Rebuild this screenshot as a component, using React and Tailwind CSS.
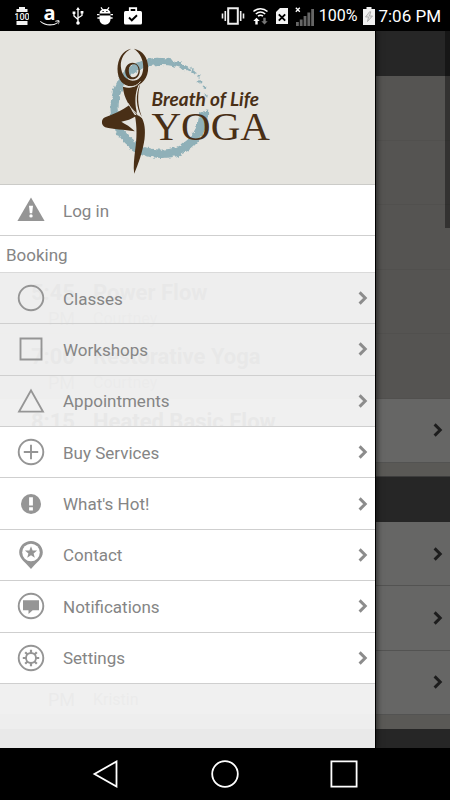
import { useState } from 'react';

const bookingItems = [
  { label: 'Classes', icon: 'circle' },
  { label: 'Workshops', icon: 'square' },
  { label: 'Appointments', icon: 'triangle' },
];

const moreItems = [
  { label: 'Buy Services', icon: 'plus' },
  { label: "What's Hot!", icon: 'alert' },
  { label: 'Contact', icon: 'pin' },
  { label: 'Notifications', icon: 'chat' },
  { label: 'Settings', icon: 'gear' },
];

const today = [
  { past: true },
  { past: true },
  { past: true },
  { past: true, time: '5:45', half: 'PM', name: 'Power Flow', teacher: 'Courtney' },
  { past: true, time: '7:00', half: 'PM', name: 'Restorative Yoga', teacher: 'Courtney' },
  { time: '8:15', name: 'Heated Basic Flow' },
];

const tomorrow = [{}, {}, { half: 'PM', teacher: 'Kristin' }];

function Chevron({ className }) {
  return (
    <svg viewBox="0 0 10 14" className={`w-[10px] h-[14px] shrink-0 ${className}`} fill="none" stroke="currentColor" strokeWidth="3" aria-hidden="true">
      <path d="M1.6 1.4 7.2 7l-5.6 5.6" />
    </svg>
  );
}

function MenuIcon({ name }) {
  return (
    <svg viewBox="0 0 28 28" className="w-7 h-7 shrink-0 text-[#959595]" fill="none" stroke="currentColor" strokeWidth="1.9" aria-hidden="true">
      {name === 'warning' && (
        <>
          <path d="M14 1.5 27.6 25H.4z" fill="currentColor" stroke="none" />
          <path d="M12 9.8h4l-.8 7.4h-2.4z" fill="#fff" stroke="none" />
          <circle cx="14" cy="19.9" r="1.7" fill="#fff" stroke="none" />
        </>
      )}
      {name === 'circle' && <circle cx="14" cy="14" r="12.3" />}
      {name === 'square' && <path d="M3.5 3.5h21v21h-21z" />}
      {name === 'triangle' && <path d="M14 3.4 25.9 24.6H2.1z" />}
      {name === 'plus' && (
        <>
          <circle cx="14" cy="14" r="12.3" />
          <path d="M14 6.8v14.4M6.8 14h14.4" />
        </>
      )}
      {name === 'alert' && (
        <>
          <circle cx="14" cy="14" r="10" fill="currentColor" stroke="none" />
          <path d="M12.1 7.3h3.8v8.2h-3.8zM12.1 17.3h3.8v3.2h-3.8z" fill="#fff" stroke="none" />
        </>
      )}
      {name === 'pin' && (
        <>
          <path d="M14 0C7.5 0 2.2 5 2.2 11.3c0 6.7 6.5 10.2 11.8 16.7 5.3-6.5 11.8-10 11.8-16.7C25.8 5 20.5 0 14 0z" fill="currentColor" stroke="none" />
          <circle cx="14" cy="11.5" r="8.8" fill="#fff" stroke="none" />
          <path d="m14 5.2 1.6 4.2 4.5.2-3.5 2.8 1.2 4.4-3.8-2.5-3.8 2.5 1.2-4.4-3.5-2.8 4.5-.2z" fill="currentColor" stroke="none" />
        </>
      )}
      {name === 'chat' && (
        <>
          <circle cx="14" cy="14" r="12.3" />
          <path d="M6 8.2h16v10h-6.3L11.5 22v-3.8H6z" fill="currentColor" stroke="none" />
        </>
      )}
      {name === 'gear' && (
        <>
          <circle cx="14" cy="14" r="12.3" />
          <circle cx="14" cy="14" r="5" strokeWidth="1.9" />
          <path d="M14 5.8v3.2M14 19v3.2M5.800 14H9M19 14h3.200M8.200 8.200l2.300 2.300M17.500 17.500l2.300 2.300M19.800 8.200l-2.300 2.300M10.500 17.500l-2.300 2.300" strokeWidth="2.2" />
        </>
      )}
    </svg>
  );
}

function MenuItem({ item, active, onSelect }) {
  return (
    <li className="border-b border-[#cfcfcf]">
      <button
        type="button"
        onClick={() => onSelect(item.label)}
        aria-current={active ? 'page' : undefined}
        className="w-full h-full flex items-center pl-[17px] pr-[7px] text-left cursor-pointer"
      >
        <MenuIcon name={item.icon} />
        <span className="flex-1 pl-[18px] pt-px">{item.label}</span>
        <Chevron className="text-[#8c8c8c]" />
      </button>
    </li>
  );
}

function Logo() {
  return (
    <svg viewBox="2.5 -4 190 153" className="w-[190px] h-[153px]" role="img" aria-label="Breath of Life Yoga">
      <defs>
        <filter id="brush" x="-10%" y="-10%" width="120%" height="120%" colorInterpolationFilters="sRGB">
          <feTurbulence type="fractalNoise" baseFrequency="0.07" numOctaves="2" seed="4" />
          <feDisplacementMap in="SourceGraphic" scale="16" xChannelSelector="R" yChannelSelector="G" />
        </filter>
      </defs>
      <g transform="scale(0.33333)">
        {/* brushed ring */}
        <g filter="url(#brush)" fill="#8fb0b8" stroke="#8fb0b8" strokeWidth="4">
          <path d="M351 228C350 312 292 368 213 367 128 367 63 308 62 218 62 138 112 78 192 71 228 68 256 76 290 94L284 103C252 88 226 85 194 89 126 95 82 148 82 218 84 290 137 345 213 346 276 346 324 302 328 236z" />
          <path d="M284 92l16 7-3 9-15-8zM306 103l12 8-5 7-10-8zM320 118l10 4-4 6-8-3zM325 132l11 9-6 4-8-6zM338 152l9 3-2 7-8-4zM343 178l6 8-4 4z" strokeWidth="1" />
        </g>
        {/* dancer */}
        <g fill="#492f16">
          <path d="M122 41C96 46 81 72 81 102 81 132 96 154 124 154 155 153 174 128 173 96 172 68 157 46 130 41 149 53 160 76 158 102 156 124 145 137 126 137 106 136 93 119 91 94 90 70 102 51 122 41z" />
          <path d="M126 83c-13 0-22 11-22 25 0 14 9 25 21 25 13 0 23-11 23-25S139 83 126 83zm4 5c9 0 14 8 14 18 0 12-7 21-15 21-9 0-14-9-14-20s6-19 15-19z" fillRule="evenodd" />
          <path d="M97 155c20 6 38 3 50-10-12 22-14 46-11 72l5 26c-10-14-22-26-29-40-9-16-13-30-15-48z" />
          <path d="M116 211C96 226 70 238 44 247c-13 5-13 24 0 30 24 7 58 7 89 12-12-13-28-22-41-29 16-2 32-8 44-16-8-9-14-20-20-33z" />
          <path d="M133 240c7 36 6 70 1 105-3 26-6 48-3 71 11-24 26-67 31-103 3-28 1-51-10-67-5-5-12-7-19-6z" />
          <path d="M150 144c-10 34-10 64 4 102-17-28-21-66-4-102z" />
        </g>
        <g fill="none" stroke="#e5e4df" strokeWidth="2.5">
          <path d="M98 153c22 6 42 1 52-14" />
          <path d="M112 204c10 18 24 30 42 44" />
        </g>
      </g>
      <text x="61" y="71" className="font-['Lato'] font-bold italic text-[19px]" fill="#492f16">Breath of Life</text>
      <text x="61" y="105" className="font-['Liberation_Serif'] text-[41px]" fill="#492f16">YOGA</text>
    </svg>
  );
}

function ClassRow({ row }) {
  return (
    <li className={row.past ? 'flex items-center border-b border-[#cac8c2] bg-[#d4d2cc]' : 'flex items-center border-b border-[#d0d0ce] bg-[#fefefc]'}>
      <div className="w-[75px] self-stretch pt-[9px] flex flex-col items-end text-[#333]">
        <span className="h-7 text-[22px] leading-7 font-bold">{row.time}</span>
        <span className="text-[18px] leading-6 text-[#777]">{row.half}</span>
      </div>
      <div className="flex-1 self-stretch pl-[18px] pt-[9px] flex flex-col text-[#333]">
        <span className="h-7 text-[22px] leading-7 font-bold whitespace-nowrap">{row.name}</span>
        <span className="text-[16px] leading-6 text-[#888]">{row.teacher}</span>
      </div>
      {!row.past && <Chevron className="mr-[7px] text-[#4a4a4a]" />}
    </li>
  );
}

function StatusBar() {
  return (
    <header className="h-[31px] shrink-0 bg-black text-white flex items-center justify-between pt-px pl-[15px] pr-[9px]">
      <div className="flex items-center">
        {/* battery widget */}
        <svg viewBox="0 0 14 20" className="w-[14px] h-5" fill="#f2f2f2" aria-hidden="true">
          <path d="M4 1h6v2h2.5v3h-11V3H4zM1.5 15h11v4h-11z" />
          <text x="7" y="14" textAnchor="middle" className="font-['Roboto'] font-medium text-[9px]">100</text>
        </svg>
        {/* shopping app */}
        <svg viewBox="0 0 20 28" className="w-5 h-7 ml-[11px]" fill="#fff" aria-hidden="true">
          <text x="9.500" y="18" textAnchor="middle" className="font-['Open_Sans'] font-bold text-[20px]">a</text>
          <path d="M.5 19c5 4 12 4.500 17 1.200l.5.800C12.500 25 4.500 24 0 19.600zM15 19c2-.8 4-.8 4.400-.2.400.8-.2 3-1.400 4 .4-1.200.8-2.600.4-3-.4-.4-2-.3-3.400-.2z" />
        </svg>
        {/* usb */}
        <svg viewBox="0 0 12 18" className="w-3 h-[18px] ml-3" fill="none" stroke="#fff" strokeWidth="1.300" aria-hidden="true">
          <path d="M6 2v13M2 6v3l4 3.500M10 6v2.500L6 11" />
          <path d="M6 0l2 3H4z" fill="#fff" stroke="none" />
          <circle cx="6" cy="16" r="1.800" fill="#fff" stroke="none" />
          <path d="M.6 4.500h2.800V7H.6zM8.600 4h2.800v2.600H8.600z" fill="#fff" stroke="none" />
        </svg>
        {/* debugging */}
        <svg viewBox="0 0 16 18" className="w-4 h-[18px] ml-[13px]" fill="#fff" aria-hidden="true">
          <path d="M2.500 6.500C2.500 3.600 4.600 2 8 2s5.500 1.600 5.500 4.500zM2.500 8.400h11V12c0 3.400-2.200 5.700-5.500 5.700S2.500 15.400 2.500 12z" />
          <path d="M4 .4 5.800 3M12 .4 10.200 3M0 7.600h2.500M13.500 7.600H16M.4 11H3M13 11h2.600" stroke="#fff" strokeWidth="1.300" />
          <path d="M5.500 4h1.200v1.100H5.500zM9.300 4h1.200v1.100H9.300z" fill="#000" />
        </svg>
        {/* work profile bag */}
        <svg viewBox="0 0 20 18" className="w-5 h-[18px] ml-[10px]" fill="#fff" aria-hidden="true">
          <path d="M6.800 4V1.200h6.400V4" fill="none" stroke="#fff" strokeWidth="1.800" />
          <rect x="1" y="4" width="18" height="13.500" rx="1.500" />
          <path d="m6 10.500 2.800 2.800 5.200-5" fill="none" stroke="#000" strokeWidth="1.900" />
        </svg>
      </div>
      <div className="flex items-center">
        {/* vibrate */}
        <svg viewBox="0 0 24 18" className="w-6 h-[18px]" fill="none" stroke="#eee" aria-hidden="true">
          <path d="M7.200 1.200h9.600v15.600H7.200z" strokeWidth="2" />
          <path d="M4.300 4v10M1.500 6.500v5M19.700 4v10M22.500 6.500v5" strokeWidth="1.600" />
        </svg>
        {/* wifi */}
        <svg viewBox="0 0 17 18" className="w-[17px] h-[18px] ml-[7px]" fill="none" stroke="#fff" strokeWidth="1.500" aria-hidden="true">
          <path d="M1.500 4.500c4-3.800 10-3.800 14 0M3.800 7c3-2.600 6.400-2.600 9.400 0M6 9.200c1.600-1.300 3.400-1.300 5 0" />
          <path d="M4.500 10.800 1.300 14h2v3.500h2.400V14h2z" fill="#fff" stroke="none" />
          <path d="m12.500 17.500 3.200-3.200h-2v-3.500h-2.400v3.500h-2z" fill="#777" stroke="none" />
        </svg>
        {/* no sim */}
        <svg viewBox="0 0 12 16" className="w-3 h-4 ml-[7px]" aria-hidden="true">
          <path d="M4 0h8v16H0V4z" fill="#f4f4f4" />
          <path d="m2.800 6.300 6.400 6.400M9.200 6.300l-6.400 6.400" stroke="#000" strokeWidth="1.900" />
        </svg>
        {/* signal */}
        <svg viewBox="0 0 19 19" className="w-[19px] h-[19px] ml-[7px]" aria-hidden="true">
          <path d="m.8.800 4 4M4.800.800l-4 4" stroke="#fff" strokeWidth="1.300" />
          <path d="M1 15h2.800v4H1zM4.800 12.500h2.800V19H4.800zM8.600 9h2.800v10H8.600zM12.400 5.500h2.800V19h-2.800zM16.200 2H19v17h-2.800z" fill="#666" />
        </svg>
        <span className="ml-[5px] text-[16px] leading-5">100%</span>
        <svg viewBox="0 0 12 18" className="w-3 h-[18px] ml-[6px]" aria-hidden="true">
          <path d="M3.500 0h5v2H12v16H0V2h3.500z" fill="#f0f0f0" />
          <path d="M6.500 4.800 2.500 10h3l-1 4.500L9.500 9h-3l1.300-4.200z" fill="#ddd" stroke="#999" strokeWidth=".7" />
        </svg>
        <span className="ml-[3px] text-[17px] leading-5">7:06 PM</span>
      </div>
    </header>
  );
}

export default function App() {
  const [open, setOpen] = useState(true);
  const [current, setCurrent] = useState('Classes');

  return (
    <div className="min-h-screen flex flex-col bg-black font-['Roboto',sans-serif]">
      <StatusBar />

      <main className="relative flex-1 overflow-hidden bg-[#606060]">
        {/* Schedule */}
        <div className="h-[45px]" />
        <ul className="grid auto-rows-fr min-h-[387px]">
          {today.map((row, i) => <ClassRow key={i} row={row} />)}
        </ul>
        <div className="h-[14px] bg-[#e2ded8] border-b border-[#999]" />
        <div className="h-[45px]" />
        <ul className="grid auto-rows-fr min-h-[193px]">
          {tomorrow.map((row, i) => <ClassRow key={i} row={row} />)}
        </ul>
        <div className="h-[14px] bg-[#e2ded8]" />

        {open && (
          <>
            <button type="button" aria-label="Close menu" onClick={() => setOpen(false)} className="absolute inset-0 w-full bg-black/60" />
            <div className="absolute right-0 top-0 w-[5px] h-[197px] bg-black/40" />

            {/* Drawer */}
            <nav className="absolute inset-y-0 left-0 w-5/6 flex flex-col bg-white/90 text-[#858585] text-[17px] leading-6 shadow-[1px_0_0_#000,2px_0_6px_rgba(0,0,0,0.6)]">
              <div className="h-[154px] bg-[#e5e4df] border-b border-[#cbcbc8] flex justify-center">
                <Logo />
              </div>
              <button type="button" className="h-[51px] bg-white border-b border-[#cfcfcf] flex items-center pl-[17px] text-left cursor-pointer">
                <MenuIcon name="warning" />
                <span className="pl-[18px] pt-px">Log in</span>
              </button>
              <h2 className="h-[37px] bg-white border-b border-[#dadada] flex items-center pl-[6px] pt-px">Booking</h2>
              <ul className="grid auto-rows-fr min-h-[154px]">
                {bookingItems.map((item) => (
                  <MenuItem key={item.label} item={item} active={current === item.label} onSelect={setCurrent} />
                ))}
              </ul>
              <ul className="grid auto-rows-fr min-h-[257px] bg-white">
                {moreItems.map((item) => (
                  <MenuItem key={item.label} item={item} active={current === item.label} onSelect={setCurrent} />
                ))}
              </ul>
            </nav>
          </>
        )}
      </main>

      {/* System buttons */}
      <footer className="h-[52px] shrink-0 flex items-center justify-center gap-[91px]">
        <button type="button" aria-label="Back" onClick={() => setOpen(false)}>
          <svg viewBox="0 0 28 28" className="w-7 h-7" fill="none" stroke="#fff" strokeWidth="1.8">
            <path d="M24.5 1.5v25L2.5 14z" />
          </svg>
        </button>
        <button type="button" aria-label="Home" onClick={() => setOpen(true)}>
          <svg viewBox="0 0 28 28" className="w-7 h-7" fill="none" stroke="#fff" strokeWidth="1.8">
            <circle cx="14" cy="14" r="12.8" />
          </svg>
        </button>
        <button type="button" aria-label="Recent apps">
          <svg viewBox="0 0 28 28" className="w-7 h-7" fill="none" stroke="#fff" strokeWidth="1.8">
            <path d="M1.4 1.4h25.2v25.2H1.4z" />
          </svg>
        </button>
      </footer>
    </div>
  );
}
